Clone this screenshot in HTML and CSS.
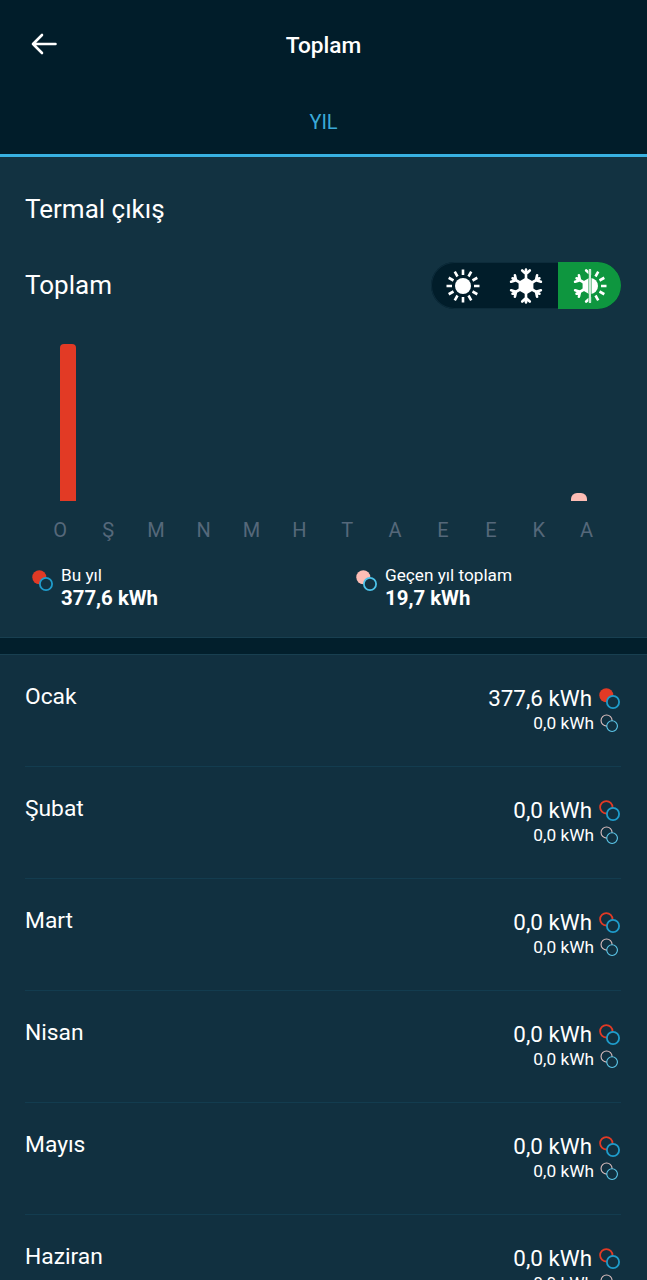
FILE: index.html
```html
<!DOCTYPE html>
<html lang="tr">
<head>
    <meta charset="UTF-8">
    <title>Toplam</title>
    <link rel="stylesheet" href="styles.css">
</head>
<body>

    <svg class="defs" width="0" height="0">
        <symbol id="ray-set" viewBox="-18 -18 36 36">
            <g stroke="#fff" stroke-width="2.600" stroke-linecap="butt">
                <path d="M0-11V-16.500M5.500-9.500L8.250-14.300M9.500-5.500L14.300-8.250M11 0H16.500M9.500 5.500L14.300 8.250M5.500 9.500L8.250 14.300M0 11V16.500M-5.500 9.500L-8.250 14.300M-9.500 5.500L-14.300 8.250M-11 0H-16.500M-9.500-5.500L-14.300-8.250M-5.500-9.500L-8.250-14.300"/>
            </g>
        </symbol>
        <symbol id="flake-arms" viewBox="-18 -18 36 36">
            <g stroke="#fff" stroke-width="2.600" fill="none" stroke-linecap="round" stroke-linejoin="round">
                <path d="M0-7V-16.500M-3.800-15.500L0-12L3.800-15.500"/>
                <path d="M0-7V-15.500M-3.800-15L0-11.500L3.800-15" transform="rotate(60)"/>
                <path d="M0-7V-15.500M-3.800-15L0-11.500L3.800-15" transform="rotate(120)"/>
                <path d="M0-7V-16.500M-3.800-15.500L0-12L3.800-15.500" transform="rotate(180)"/>
                <path d="M0-7V-15.500M-3.800-15L0-11.500L3.800-15" transform="rotate(240)"/>
                <path d="M0-7V-15.500M-3.800-15L0-11.500L3.800-15" transform="rotate(300)"/>
            </g>
            <path d="M0-8.500L7.400-4.250V4.250L0 8.500L-7.400 4.250V-4.250Z" fill="#fff"/>
        </symbol>
        <clipPath id="left-half"><rect x="-18" y="-18" width="16.500" height="36"/></clipPath>
        <clipPath id="right-half"><rect x="1.500" y="-18" width="17" height="36"/></clipPath>

        <!-- small legend icons: red = heating, blue = cooling -->
        <symbol id="pair-solid" viewBox="0 0 22 22">
            <circle cx="7.300" cy="7.300" r="7" fill="#e23a25"/>
            <circle cx="14" cy="14" r="6.100" fill="#123241" stroke="#1f9ccb" stroke-width="1.800"/>
        </symbol>
        <symbol id="pair-pale" viewBox="0 0 22 22">
            <circle cx="7.300" cy="7.300" r="7" fill="#fdbdb5"/>
            <circle cx="14" cy="14" r="6.100" fill="#123241" stroke="#4cc3ea" stroke-width="1.800"/>
        </symbol>
        <symbol id="pair-line" viewBox="0 0 22 22">
            <circle cx="7.300" cy="7.300" r="6.200" fill="none" stroke="#e23a25" stroke-width="1.800"/>
            <circle cx="14" cy="14" r="6.100" fill="#113040" stroke="#1f9ccb" stroke-width="1.800"/>
        </symbol>
        <symbol id="pair-row" viewBox="0 0 22 22">
            <circle cx="7.300" cy="7.300" r="7" fill="#e23a25"/>
            <circle cx="14" cy="14" r="6.100" fill="#113040" stroke="#1f9ccb" stroke-width="1.800"/>
        </symbol>
        <symbol id="pair-thin" viewBox="0 0 22 22">
            <circle cx="7.600" cy="7.600" r="6.400" fill="none" stroke="#d9bcbc" stroke-width="1.300"/>
            <circle cx="14" cy="14" r="6.200" fill="#113040" stroke="#5cc6e8" stroke-width="1.300"/>
        </symbol>
    </svg>

    <header class="topbar">
        <div class="topbar-row">
            <svg class="back" viewBox="0 0 28 24" width="28" height="24">
                <path d="M25.500 12H3M12 3L3 12L12 21" fill="none" stroke="#fff" stroke-width="2.600" stroke-linecap="round" stroke-linejoin="round"/>
            </svg>
            <h1>Toplam</h1>
        </div>
        <div class="tab">YIL</div>
    </header>

    <section class="panel">
        <h2>Termal çıkış</h2>

        <div class="total-row">
            <h3>Toplam</h3>
            <div class="mode-switch">
                <span class="mode">
                    <svg width="36" height="36" viewBox="-18 -18 36 36">
                        <use href="#ray-set" x="-18" y="-18" width="36" height="36"/>
                        <circle r="8" fill="#fff"/>
                    </svg>
                </span>
                <span class="mode">
                    <svg width="36" height="36"><use href="#flake-arms" width="36" height="36"/></svg>
                </span>
                <span class="mode active">
                    <svg width="36" height="36" viewBox="-18 -18 36 36">
                        <g clip-path="url(#left-half)"><use href="#flake-arms" x="-18" y="-18" width="36" height="36"/></g>
                        <g clip-path="url(#right-half)">
                            <use href="#ray-set" x="-18" y="-18" width="36" height="36"/>
                            <circle r="8" fill="#fff"/>
                        </g>
                        <path d="M0-17V17" stroke="#fff" stroke-width="1.600"/>
                    </svg>
                </span>
            </div>
        </div>

        <div class="chart">
            <div class="month"><div class="bars"><i class="bar"></i><i class="bar now tall"></i></div><span>O</span></div>
            <div class="month"><div class="bars"></div><span>Ş</span></div>
            <div class="month"><div class="bars"></div><span>M</span></div>
            <div class="month"><div class="bars"></div><span>N</span></div>
            <div class="month"><div class="bars"></div><span>M</span></div>
            <div class="month"><div class="bars"></div><span>H</span></div>
            <div class="month"><div class="bars"></div><span>T</span></div>
            <div class="month"><div class="bars"></div><span>A</span></div>
            <div class="month"><div class="bars"></div><span>E</span></div>
            <div class="month"><div class="bars"></div><span>E</span></div>
            <div class="month"><div class="bars"></div><span>K</span></div>
            <div class="month"><div class="bars"><i class="bar past short"></i><i class="bar"></i></div><span>A</span></div>
        </div>

        <div class="legend">
            <div class="legend-item first">
                <svg class="legend-icon"><use href="#pair-solid"/></svg>
                <div>
                    <div class="legend-name">Bu yıl</div>
                    <div class="legend-value">377,6 kWh</div>
                </div>
            </div>
            <div class="legend-item">
                <svg class="legend-icon"><use href="#pair-pale"/></svg>
                <div>
                    <div class="legend-name">Geçen yıl toplam</div>
                    <div class="legend-value">19,7 kWh</div>
                </div>
            </div>
        </div>
    </section>

    <div class="band"></div>

    <section class="months">
        <div class="row">
            <div class="row-name">Ocak</div>
            <div class="row-values">
                <div class="now-val">377,6 kWh <svg class="pair"><use href="#pair-row"/></svg></div>
                <div class="past-val">0,0 kWh <svg class="pair-sm"><use href="#pair-thin"/></svg></div>
            </div>
        </div>
        <div class="row">
            <div class="row-name">Şubat</div>
            <div class="row-values">
                <div class="now-val">0,0 kWh <svg class="pair"><use href="#pair-line"/></svg></div>
                <div class="past-val">0,0 kWh <svg class="pair-sm"><use href="#pair-thin"/></svg></div>
            </div>
        </div>
        <div class="row">
            <div class="row-name">Mart</div>
            <div class="row-values">
                <div class="now-val">0,0 kWh <svg class="pair"><use href="#pair-line"/></svg></div>
                <div class="past-val">0,0 kWh <svg class="pair-sm"><use href="#pair-thin"/></svg></div>
            </div>
        </div>
        <div class="row">
            <div class="row-name">Nisan</div>
            <div class="row-values">
                <div class="now-val">0,0 kWh <svg class="pair"><use href="#pair-line"/></svg></div>
                <div class="past-val">0,0 kWh <svg class="pair-sm"><use href="#pair-thin"/></svg></div>
            </div>
        </div>
        <div class="row">
            <div class="row-name">Mayıs</div>
            <div class="row-values">
                <div class="now-val">0,0 kWh <svg class="pair"><use href="#pair-line"/></svg></div>
                <div class="past-val">0,0 kWh <svg class="pair-sm"><use href="#pair-thin"/></svg></div>
            </div>
        </div>
        <div class="row">
            <div class="row-name">Haziran</div>
            <div class="row-values">
                <div class="now-val">0,0 kWh <svg class="pair"><use href="#pair-line"/></svg></div>
                <div class="past-val">0,0 kWh <svg class="pair-sm"><use href="#pair-thin"/></svg></div>
            </div>
        </div>
    </section>

</body>
</html>
```

FILE: styles.css
```css
html, body {
    height: 1280px;
    overflow: hidden;
}

body {
    font-family: Roboto, sans-serif;
    background-color: #123241;
    margin: 0;
    color: #fff;
}

.defs {
    display: block;
    height: 0;
}

.topbar {
    background-color: #011d2a;
    height: 154px;
    border-bottom: 3px solid #38b1e1;
}

.topbar-row {
    display: flex;
    align-items: center;
    justify-content: center;
    height: 90px;
    position: relative;
}

.back {
    position: absolute;
    left: 30px;
    top: 32px;
}

h1 {
    margin: 0;
    font-size: 22.700px;
    font-weight: 500;
}

.tab {
    text-align: center;
    color: #3aa9d8;
    font-size: 20px;
    line-height: 24px;
    margin-top: 20px;
}

.panel {
    height: 480px;
    padding: 0 26px 0 25px;
    box-sizing: border-box;
    background-color: #123241;
}

h2 {
    margin: 0;
    padding-top: 37px;
    font-size: 26px;
    line-height: 30px;
    font-weight: 400;
}

.total-row {
    display: flex;
    justify-content: space-between;
    align-items: center;
    margin-top: 38px;
}

h3 {
    margin: 0 0 2px;
    font-size: 26px;
    font-weight: 400;
}

.mode-switch {
    display: flex;
    width: 190px;
    height: 47px;
    border-radius: 24px;
    overflow: hidden;
    background-color: #011d2a;
    box-shadow: inset 0 0 0 1px #0d2c3b;
}

.mode {
    flex: 1;
    display: flex;
    align-items: center;
    justify-content: center;
}

.mode svg {
    display: block;
}

.mode.active {
    background-color: #0e963f;
}

.mode.active svg {
    margin-left: 1px;
}

.chart {
    display: grid;
    grid-template-columns: repeat(12, 47.85px);
    margin: 35px 0 0 11.3px;
}

.month {
    display: flex;
    flex-direction: column;
    align-items: center;
}

.month span {
    font-size: 20px;
    line-height: 24px;
    margin-top: 17px;
    color: #55687a;
}

.bars {
    display: flex;
    align-items: flex-end;
    justify-content: center;
    height: 157px;
}

.bar {
    display: block;
    width: 16px;
    border-radius: 6px 6px 0 0;
}

.now {
    background-color: #e23a25;
}

.past {
    background-color: #fdbdb5;
}

.tall {
    height: 157px;
    border-radius: 4px 4px 0 0;
}

.short {
    height: 8px;
}

.legend {
    display: flex;
    margin-top: 23px;
    padding-left: 7px;
}

.legend-item {
    display: flex;
    gap: 7px;
}

.legend-item.first {
    flex: 0 0 324px;
}

.legend-icon {
    width: 22px;
    height: 22px;
    margin-top: 5px;
}

.legend-name {
    font-size: 17.200px;
    line-height: 21px;
}

.legend-value {
    font-size: 20.400px;
    line-height: 25px;
    font-weight: 700;
}

.band {
    height: 16px;
    background-color: #021f2c;
    border-top: 1px solid #183f50;
    border-bottom: 1px solid #183f50;
}

.months {
    padding: 0 26px 0 25px;
    background-color: #113040;
}

.row {
    display: flex;
    justify-content: space-between;
    height: 112px;
    box-sizing: border-box;
    padding-top: 28px;
    border-bottom: 1px solid #133c4f;
}

.row-name {
    font-size: 22.800px;
    line-height: 28px;
}

.row-values {
    display: flex;
    flex-direction: column;
    align-items: flex-end;
}

.now-val {
    display: flex;
    align-items: center;
    gap: 7px;
    font-size: 22.400px;
    line-height: 30px;
}

.past-val {
    display: flex;
    align-items: center;
    gap: 6px;
    font-size: 17.300px;
    line-height: 20px;
    margin-right: 2px;
}

.pair {
    width: 22px;
    height: 22px;
    margin-top: 2px;
}

.pair-sm {
    width: 19px;
    height: 19px;
}
```
